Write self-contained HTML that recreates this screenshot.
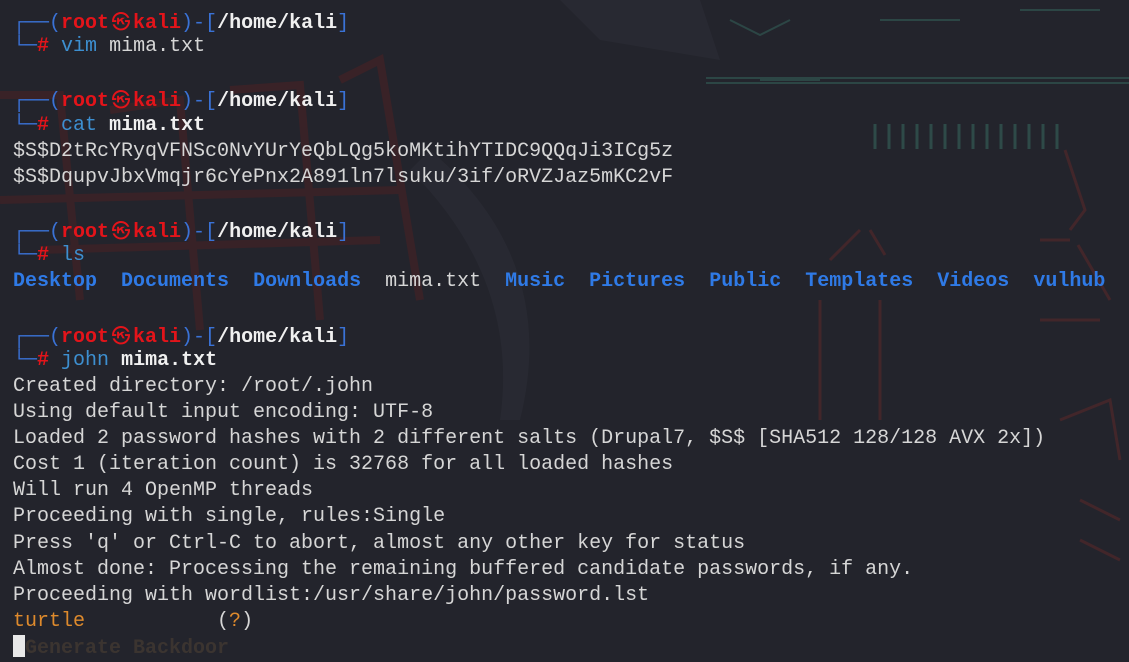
<!DOCTYPE html>
<html><head><meta charset="utf-8"><style>
html,body{margin:0;padding:0}
body{width:1129px;height:657px;overflow:hidden;background:#23242c;position:relative;font-family:"Liberation Mono","DejaVu Sans Mono",monospace;font-size:20px;}
#bg{position:absolute;left:0;top:0}
#t{position:absolute;left:13px;top:8px;white-space:pre;line-height:26.13px;color:#d6d6d6}
.l{height:26.13px}
.bl{color:#3a72d6}
.r{color:#e3141a;font-weight:bold}
.w{color:#f0f0f0;font-weight:bold}
.c{color:#3d8fd0}
.d{color:#2f7ae6;font-weight:bold}
.o{color:#de8a2c}
.k{display:inline-block;width:24px;text-align:center;font-family:"Noto Sans CJK SC",sans-serif;font-size:19px;color:#e3141a;font-weight:bold}
.cur{display:inline-block;width:12px;height:22px;background:#e8e8e8;vertical-align:-4px}
.gh{color:#3b3430;font-weight:bold}
</style></head><body>
<svg id="bg" width="1129" height="657">
<g stroke="#3e2227" stroke-width="8" fill="none" opacity="0.8">
<path d="M0 95 L60 95 L80 300 M110 110 L180 100 L200 330 M230 90 L300 85 L320 320 M340 80 L380 60 L420 300"/>
<path d="M0 200 L400 190 M40 250 L380 240"/>
</g>
<g fill="#2b2c34" opacity="0.7"><path d="M560 0 L700 0 L720 60 L600 40 Z"/><path d="M430 150 Q560 260 520 420 L500 420 Q520 280 410 170Z"/></g>
<g stroke="#2e4a48" stroke-width="2" fill="none" opacity="0.9">
<path d="M730 20 L760 35 L790 20 M880 20 L960 20 M1020 10 L1100 10 M760 80 L820 80"/>
<line x1="706" y1="78" x2="1129" y2="78"/><line x1="706" y1="83" x2="1129" y2="83"/>
</g>
<g stroke="#2e4a48" stroke-width="3"><path d="M875 124v25M889 124v25M903 124v25M917 124v25M931 124v25M945 124v25M959 124v25M973 124v25M987 124v25M1001 124v25M1015 124v25M1029 124v25M1043 124v25M1057 124v25"/></g>
<g stroke="#4a272b" stroke-width="3" fill="none" opacity="0.8">
<path d="M860 230 L830 260 M870 230 L885 255 M1065 150 L1085 210 L1070 230 M1040 240 L1070 240 M1078 245 L1110 300 M880 300 L880 420 M820 300 L820 420 M1040 320 L1100 320 M1060 420 L1110 400 L1120 460 M1080 500 L1120 520 M1080 540 L1120 560"/>
</g>
</svg>
<div id="t"><div class="l"><span class="bl">┌──(</span><span class="r">root</span><span class="k">㉿</span><span class="r">kali</span><span class="bl">)-[</span><span class="w">/home/kali</span><span class="bl">]</span></div><div class="l"><span class="bl">└─</span><span class="r">#</span> <span class="c">vim</span> mima.txt</div><div class="l"></div><div class="l"><span class="bl">┌──(</span><span class="r">root</span><span class="k">㉿</span><span class="r">kali</span><span class="bl">)-[</span><span class="w">/home/kali</span><span class="bl">]</span></div><div class="l"><span class="bl">└─</span><span class="r">#</span> <span class="c">cat</span> <span class="w">mima.txt</span></div><div class="l">$S$D2tRcYRyqVFNSc0NvYUrYeQbLQg5koMKtihYTIDC9QQqJi3ICg5z</div><div class="l">$S$DqupvJbxVmqjr6cYePnx2A891ln7lsuku/3if/oRVZJaz5mKC2vF</div><div class="l"></div><div class="l"><span class="bl">┌──(</span><span class="r">root</span><span class="k">㉿</span><span class="r">kali</span><span class="bl">)-[</span><span class="w">/home/kali</span><span class="bl">]</span></div><div class="l"><span class="bl">└─</span><span class="r">#</span> <span class="c">ls</span></div><div class="l"><span class="d">Desktop</span>  <span class="d">Documents</span>  <span class="d">Downloads</span>  mima.txt  <span class="d">Music</span>  <span class="d">Pictures</span>  <span class="d">Public</span>  <span class="d">Templates</span>  <span class="d">Videos</span>  <span class="d">vulhub</span></div><div class="l"></div><div class="l"><span class="bl">┌──(</span><span class="r">root</span><span class="k">㉿</span><span class="r">kali</span><span class="bl">)-[</span><span class="w">/home/kali</span><span class="bl">]</span></div><div class="l"><span class="bl">└─</span><span class="r">#</span> <span class="c">john</span> <span class="w">mima.txt</span></div><div class="l">Created directory: /root/.john</div><div class="l">Using default input encoding: UTF-8</div><div class="l">Loaded 2 password hashes with 2 different salts (Drupal7, $S$ [SHA512 128/128 AVX 2x])</div><div class="l">Cost 1 (iteration count) is 32768 for all loaded hashes</div><div class="l">Will run 4 OpenMP threads</div><div class="l">Proceeding with single, rules:Single</div><div class="l">Press 'q' or Ctrl-C to abort, almost any other key for status</div><div class="l">Almost done: Processing the remaining buffered candidate passwords, if any.</div><div class="l">Proceeding with wordlist:/usr/share/john/password.lst</div><div class="l"><span class="o">turtle</span>           (<span class="o">?</span>)</div><div class="l"><span class="cur"></span><span class="gh">Generate Backdoor</span></div></div>
</body></html>
